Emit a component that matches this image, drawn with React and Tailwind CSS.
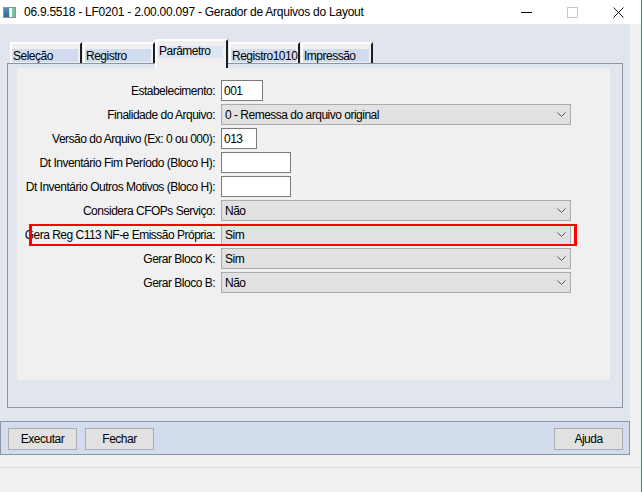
import React from 'react'

const FONT = { fontFamily: '"Liberation Sans", Arial, sans-serif' }

const Chevron = () => (
  <svg width="9" height="5" viewBox="0 0 9 5" className="shrink-0">
    <path d="M0.5 0.5 L4.5 4.5 L8.5 0.5" fill="none" stroke="#5a5a5a" strokeWidth="1" />
  </svg>
)

const Select = ({ value }) => (
  <div className="w-[350px] h-[21px] bg-[#e1e1e1] border border-[#adadad] flex items-center justify-between pl-[3px] pr-[4px]">
    <span>{value}</span>
    <Chevron />
  </div>
)

const Input = ({ value, width }) => (
  <div className={`${width} h-[21px] bg-white border border-[#7a7a7a] flex items-center pl-[2px]`}>
    {value}
  </div>
)

const rows = [
  { label: 'Estabelecimento:', input: '001', w: 'w-[42px]' },
  { label: 'Finalidade do Arquivo:', select: '0 - Remessa do arquivo original' },
  { label: 'Versão do Arquivo (Ex: 0 ou 000):', input: '013', w: 'w-[36px]' },
  { label: 'Dt Inventário Fim Período (Bloco H):', input: '', w: 'w-[70px]' },
  { label: 'Dt Inventário Outros Motivos (Bloco H):', input: '', w: 'w-[70px]' },
  { label: 'Considera CFOPs Serviço:', select: 'Não' },
  { label: 'Gera Reg C113 NF-e Emissão Própria:', select: 'Sim', marked: true },
  { label: 'Gerar Bloco K:', select: 'Sim' },
  { label: 'Gerar Bloco B:', select: 'Não' },
]

const Tab = ({ label, width }) => (
  <div className={`${width} h-[21px] border-t-2 border-l-2 border-white border-r-2 border-r-[#1e1e1e] bg-[#f0f0f0] pt-[5px] pr-[2px]`}>
    <div className="h-[13px] bg-[#d1dbee] pl-[1px] leading-[14px]">{label}</div>
  </div>
)

const WindowIcon = () => (
  <svg width="13" height="11" viewBox="0 0 13 11">
    <defs>
      <linearGradient id="ic" x1="0" y1="0" x2="0" y2="1">
        <stop offset="0" stopColor="#4f8fb8" />
        <stop offset="1" stopColor="#2f6f88" />
      </linearGradient>
    </defs>
    <rect x="0.5" y="0.5" width="12" height="10" fill="#d8dde2" stroke="#8a939c" />
    <rect x="1" y="1" width="5" height="9" fill="url(#ic)" />
    <rect x="7" y="1" width="2" height="9" fill="#f4f6f7" />
    <rect x="9" y="1" width="3" height="9" fill="#7fbf9a" />
  </svg>
)

export default function App() {
  return (
    <div
      style={FONT}
      className="w-[642px] h-[492px] bg-[#f0f0f0] border-r border-[#2f7fcd] flex flex-col text-[12px] tracking-[-0.5px] text-black overflow-hidden"
    >
      {/* title bar */}
      <div className="h-[24px] bg-white flex items-center shrink-0">
        <div className="pl-[3px] pr-[8px] pt-[1px]">
          <WindowIcon />
        </div>
        <span className="tracking-[-0.25px]">
          06.9.5518 - LF0201 - 2.00.00.097 - Gerador de Arquivos do Layout
        </span>
        <div className="ml-auto flex items-center h-full">
          <div className="w-[11px] h-px bg-black mr-[35px]" />
          <div className="w-[11px] h-[11px] border border-[#c6c6c6] mr-[35px]" />
          <svg width="11" height="11" viewBox="0 0 11 11" className="mr-[17px]">
            <path d="M0.5 0.5 L10.5 10.5 M10.5 0.5 L0.5 10.5" stroke="#111" strokeWidth="1" />
          </svg>
        </div>
      </div>

      <div className="flex h-[431px] shrink-0">
        <div className="w-[630px] flex flex-col">
          <div className="h-[397px] bg-[#e1e5ee] px-[7px] pt-[15px] pb-[13px] flex flex-col">
            {/* tabs */}
            <div className="h-[24px] flex items-end pl-[3px] shrink-0">
              <div className="self-end mb-0 flex items-end">
                <Tab label="Seleção" width="w-[72px]" />
                <div className="w-px" />
                <Tab label="Registro" width="w-[72px]" />
                <div className="relative z-10 w-[73px] h-[29px] -mb-[5px] border-t-2 border-l-2 border-white border-r-2 border-r-[#1e1e1e] bg-[#f0f0f0] pt-[5px] pl-px pr-[3px]">
                  <div className="h-[12px] bg-[#dfe5f0] pl-[1px] leading-[11px]">Parâmetro</div>
                </div>
                <div className="w-px" />
                <Tab label="Registro1010" width="w-[71px]" />
                <div className="w-px" />
                <Tab label="Impressão" width="w-[72px]" />
              </div>
            </div>

            {/* tab page */}
            <div className="h-[345px] border border-[#8d95a3] pl-[9px] pt-[4px] pr-[12px] pb-[27px]">
              <div className="h-full bg-[#f0f0f0] pt-[12px] flex flex-col gap-[3px]">
                {rows.map((r) => (
                  <div key={r.label} className="relative h-[21px] flex items-center">
                    <div className="w-[199px] text-right pr-px">{r.label}</div>
                    <div className="ml-[5px]">
                      {r.select ? <Select value={r.select} /> : <Input value={r.input} width={r.w} />}
                    </div>
                    {r.marked && (
                      <div className="absolute left-[12px] top-0 w-[548px] h-[22px] border-y-2 border-x-[3px] border-[#ff0000]" />
                    )}
                  </div>
                ))}
              </div>
            </div>
          </div>

          {/* buttons */}
          <div className="h-[34px] bg-[#d3dcec] border border-[#8d95a3] flex items-start pt-[6px] pl-[7px] pr-[6px] gap-[8px]">
            {['Executar', 'Fechar'].map((b) => (
              <div key={b} className="w-[69px] h-[22px] bg-[#e1e1e1] border border-[#adadad] flex items-center justify-center">
                {b}
              </div>
            ))}
            <div className="ml-auto w-[69px] h-[22px] bg-[#e1e1e1] border border-[#adadad] flex items-center justify-center">
              Ajuda
            </div>
          </div>
        </div>
        <div className="flex-1 bg-[#f0f0f0]" />
      </div>

      {/* status area */}
      <div className="h-[12px] shrink-0" />
      <div className="flex-1 border-t border-[#dcdcdc]" />
    </div>
  )
}
